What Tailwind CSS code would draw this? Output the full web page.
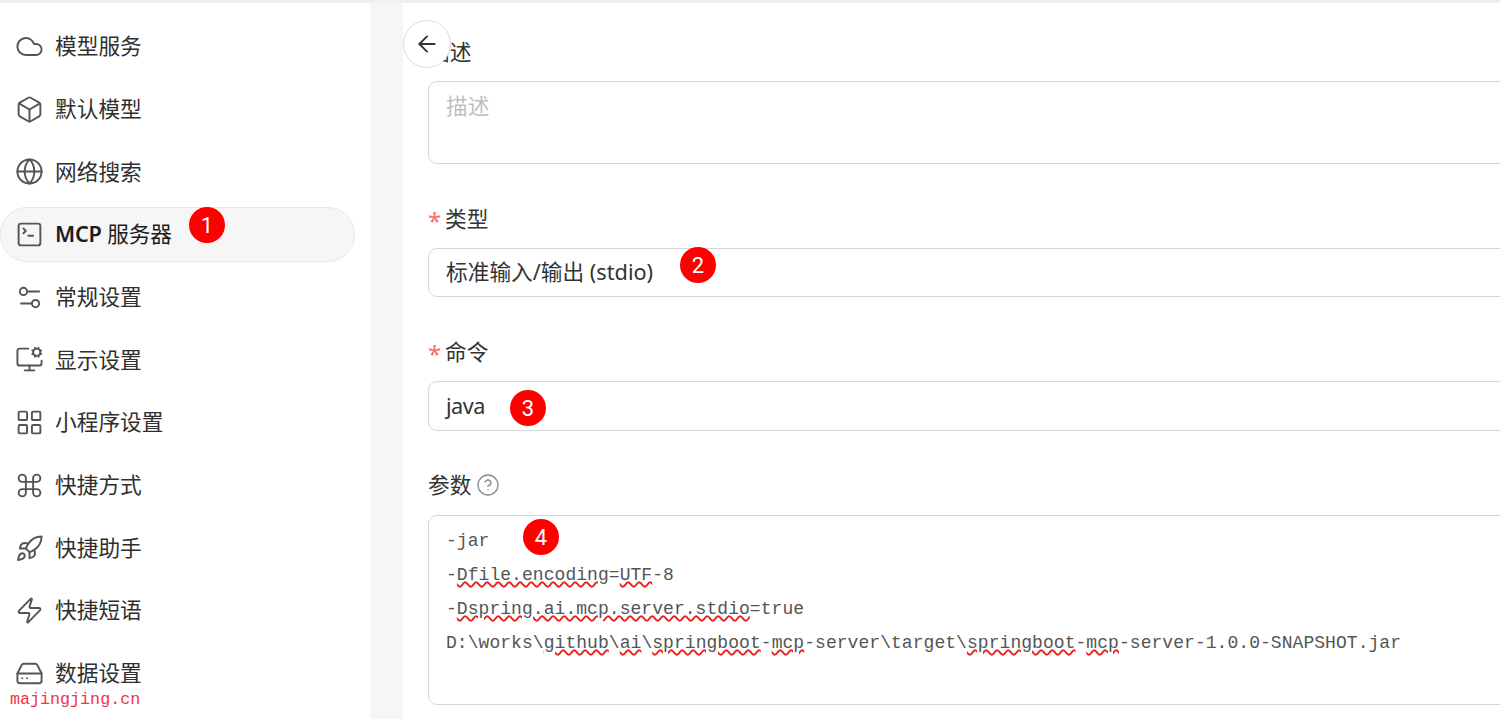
<!DOCTYPE html>
<html lang="zh-CN">
<head>
  <meta charset="UTF-8" />
  <title>MCP 服务器</title>
  <script src="https://cdn.jsdelivr.net/npm/@tailwindcss/browser@4"></script>
</head>
<body class="bg-white h-[719px] overflow-hidden font-['Noto_Sans','Noto_Sans_CJK_SC',sans-serif] text-[21.7px] text-[#333]">
  <div class="relative h-[719px] overflow-hidden">
    <div class="h-[3px] bg-[#f0f0f0]"></div>
    <div class="flex h-[716px]">

      <!-- sidebar -->
      <nav class="w-[370px] shrink-0 bg-white pt-[16px] pr-[15px] flex flex-col gap-[7.7px] text-[#2f2f2f]">
        <a class="flex items-center gap-[11px] h-[55px] pl-[14px] border border-transparent">
          <svg class="w-[29px] h-[29px] text-[#555]" viewBox="0 0 24 24" fill="none" stroke="currentColor" stroke-width="1.6" stroke-linecap="round" stroke-linejoin="round"><path d="M17.5 19H9a7 7 0 1 1 6.71-9h1.79a4.5 4.5 0 1 1 0 9Z"/></svg>
          <span>模型服务</span>
        </a>
        <a class="flex items-center gap-[11px] h-[55px] pl-[14px] border border-transparent">
          <svg class="w-[29px] h-[29px] text-[#555]" viewBox="0 0 24 24" fill="none" stroke="currentColor" stroke-width="1.6" stroke-linecap="round" stroke-linejoin="round"><path d="M21 8a2 2 0 0 0-1-1.73l-7-4a2 2 0 0 0-2 0l-7 4A2 2 0 0 0 3 8v8a2 2 0 0 0 1 1.73l7 4a2 2 0 0 0 2 0l7-4A2 2 0 0 0 21 16Z"/><path d="m3.3 7 8.7 5 8.7-5"/><path d="M12 22V12"/></svg>
          <span>默认模型</span>
        </a>
        <a class="flex items-center gap-[11px] h-[55px] pl-[14px] border border-transparent">
          <svg class="w-[29px] h-[29px] text-[#555]" viewBox="0 0 24 24" fill="none" stroke="currentColor" stroke-width="1.6" stroke-linecap="round" stroke-linejoin="round"><circle cx="12" cy="12" r="10"/><path d="M12 2a14.5 14.5 0 0 0 0 20 14.5 14.5 0 0 0 0-20"/><path d="M2 12h20"/></svg>
          <span>网络搜索</span>
        </a>
        <a class="flex items-center gap-[11px] h-[55px] pl-[14px] border border-[#e8e8e8] bg-[#f6f6f6] rounded-[27px] font-semibold text-[#1c1c1c]">
          <svg class="w-[29px] h-[29px] text-[#555]" viewBox="0 0 24 24" fill="none" stroke="currentColor" stroke-width="1.6" stroke-linecap="round" stroke-linejoin="round"><path d="m7 11 2-2-2-2"/><path d="M11 13h4"/><rect width="18" height="18" x="3" y="3" rx="2"/></svg>
          <span class="tracking-[-0.2px]">MCP <span class="font-normal">服务器</span></span>
        </a>
        <a class="flex items-center gap-[11px] h-[55px] pl-[14px] border border-transparent">
          <svg class="w-[29px] h-[29px] text-[#555]" viewBox="0 0 24 24" fill="none" stroke="currentColor" stroke-width="1.6" stroke-linecap="round" stroke-linejoin="round"><path d="M20 7h-9"/><path d="M14 17H5"/><circle cx="17" cy="17" r="3"/><circle cx="7" cy="7" r="3"/></svg>
          <span>常规设置</span>
        </a>
        <a class="flex items-center gap-[11px] h-[55px] pl-[14px] border border-transparent">
          <svg class="w-[29px] h-[29px] text-[#555]" viewBox="0 0 24 24" fill="none" stroke="currentColor" stroke-width="1.6" stroke-linecap="round" stroke-linejoin="round"><path d="M12 17v4"/><path d="m14.305 7.53.923-.382"/><path d="m15.228 4.852-.923-.383"/><path d="m16.852 3.228-.383-.924"/><path d="m16.852 8.772-.383.923"/><path d="m19.148 3.228.383-.924"/><path d="m19.53 9.696-.382-.924"/><path d="m20.772 4.852.924-.383"/><path d="m20.772 7.148.924.383"/><path d="M22 13v2a2 2 0 0 1-2 2H4a2 2 0 0 1-2-2V5a2 2 0 0 1 2-2h7"/><path d="M8 21h8"/><circle cx="18" cy="6" r="3"/></svg>
          <span>显示设置</span>
        </a>
        <a class="flex items-center gap-[11px] h-[55px] pl-[14px] border border-transparent">
          <svg class="w-[29px] h-[29px] text-[#555]" viewBox="0 0 24 24" fill="none" stroke="currentColor" stroke-width="1.6" stroke-linecap="round" stroke-linejoin="round"><rect width="7" height="7" x="3" y="3" rx="1"/><rect width="7" height="7" x="14" y="3" rx="1"/><rect width="7" height="7" x="14" y="14" rx="1"/><rect width="7" height="7" x="3" y="14" rx="1"/></svg>
          <span>小程序设置</span>
        </a>
        <a class="flex items-center gap-[11px] h-[55px] pl-[14px] border border-transparent">
          <svg class="w-[29px] h-[29px] text-[#555]" viewBox="0 0 24 24" fill="none" stroke="currentColor" stroke-width="1.6" stroke-linecap="round" stroke-linejoin="round"><path d="M15 6v12a3 3 0 1 0 3-3H6a3 3 0 1 0 3 3V6a3 3 0 1 0-3 3h12a3 3 0 1 0-3-3"/></svg>
          <span>快捷方式</span>
        </a>
        <a class="flex items-center gap-[11px] h-[55px] pl-[14px] border border-transparent">
          <svg class="w-[29px] h-[29px] text-[#555]" viewBox="0 0 24 24" fill="none" stroke="currentColor" stroke-width="1.6" stroke-linecap="round" stroke-linejoin="round"><path d="M4.5 16.5c-1.5 1.26-2 5-2 5s3.74-.5 5-2c.71-.84.7-2.13-.09-2.91a2.18 2.18 0 0 0-2.91-.09z"/><path d="m12 15-3-3a22 22 0 0 1 2-3.95A12.88 12.88 0 0 1 22 2c0 2.72-.78 7.5-6 11a22.35 22.35 0 0 1-4 2z"/><path d="M9 12H4s.55-3.03 2-4c1.62-1.08 5 0 5 0"/><path d="M12 15v5s3.03-.55 4-2c1.08-1.62 0-5 0-5"/></svg>
          <span>快捷助手</span>
        </a>
        <a class="flex items-center gap-[11px] h-[55px] pl-[14px] border border-transparent">
          <svg class="w-[29px] h-[29px] text-[#555]" viewBox="0 0 24 24" fill="none" stroke="currentColor" stroke-width="1.6" stroke-linecap="round" stroke-linejoin="round"><path d="M4 14a1 1 0 0 1-.78-1.63l9.9-10.2a.5.5 0 0 1 .86.46l-1.92 6.02A1 1 0 0 0 13 10h7a1 1 0 0 1 .78 1.63l-9.9 10.2a.5.5 0 0 1-.86-.46l1.92-6.02A1 1 0 0 0 11 14z"/></svg>
          <span>快捷短语</span>
        </a>
        <a class="flex items-center gap-[11px] h-[55px] pl-[14px] border border-transparent">
          <svg class="w-[29px] h-[29px] text-[#555]" viewBox="0 0 24 24" fill="none" stroke="currentColor" stroke-width="1.6" stroke-linecap="round" stroke-linejoin="round"><line x1="22" x2="2" y1="12" y2="12"/><path d="M5.45 5.11 2 12v6a2 2 0 0 0 2 2h16a2 2 0 0 0 2-2v-6l-3.45-6.89A2 2 0 0 0 16.76 4H7.24a2 2 0 0 0-1.79 1.11z"/><line x1="6" x2="6.01" y1="16" y2="16"/><line x1="10" x2="10.01" y1="16" y2="16"/></svg>
          <span>数据设置</span>
        </a>
      </nav>

      <!-- gutter -->
      <div class="w-[33px] shrink-0 bg-[#f6f6f6]"></div>

      <!-- form -->
      <main class="flex-1 min-w-0 bg-white pl-[25px] pt-[33px]">
        <div class="w-[1200px] flex flex-col">
          <div class="mb-[39px]">
            <label class="block h-[32px] leading-[32px] mb-[13px]">描述</label>
            <div class="h-[83px] border border-[#d6d6d6] rounded-[9px] px-[17px] py-[7px] leading-[34px] text-[#bfbfbf]">描述</div>
          </div>
          <div class="mb-[39px]">
            <label class="flex items-center h-[32px] mb-[13px]"><span class="w-[17px] text-[#ff6b6b] text-[24px] leading-[32px] pt-[4px]">*</span>类型</label>
            <div class="h-[49px] border border-[#d6d6d6] rounded-[9px] px-[17px] flex items-center">标准输入/输出 (stdio)</div>
          </div>
          <div class="mb-[38px]">
            <label class="flex items-center h-[32px] mb-[13px]"><span class="w-[17px] text-[#ff6b6b] text-[24px] leading-[32px] pt-[4px]">*</span>命令</label>
            <div class="h-[50px] border border-[#d6d6d6] rounded-[9px] px-[17px] flex items-center tracking-[-0.5px]">java</div>
          </div>
          <div>
            <label class="flex items-center gap-[5px] h-[32px] mb-[14px]">参数
              <svg class="w-[24px] h-[24px] text-[#8c8c8c]" viewBox="0 0 24 24" fill="none" stroke="currentColor" stroke-width="1.4" stroke-linecap="round" stroke-linejoin="round"><circle cx="12" cy="12" r="10"/><path d="M9.09 9a3 3 0 0 1 5.83 1c0 2-3 3-3 3"/><path d="M12 17h.01"/></svg>
            </label>
            <div class="h-[190px] border border-[#d6d6d6] rounded-[9px] px-[17px] pt-[8px] font-['Liberation_Mono',monospace] text-[18px] tracking-[0.05px] leading-[34px] text-[#555] whitespace-pre"><div>-jar</div><div>-<span class="underline decoration-wavy decoration-[#e8201c] decoration-[1.5px]">Dfile.encoding</span>=<span class="underline decoration-wavy decoration-[#e8201c] decoration-[1.5px]">UTF</span>-8</div><div>-<span class="underline decoration-wavy decoration-[#e8201c] decoration-[1.5px]">Dspring.ai.mcp.server.stdio</span>=true</div><div>D:\works\<span class="underline decoration-wavy decoration-[#e8201c] decoration-[1.5px]">github</span>\<span class="underline decoration-wavy decoration-[#e8201c] decoration-[1.5px]">ai</span>\<span class="underline decoration-wavy decoration-[#e8201c] decoration-[1.5px]">springboot</span>-<span class="underline decoration-wavy decoration-[#e8201c] decoration-[1.5px]">mcp</span>-server\target\<span class="underline decoration-wavy decoration-[#e8201c] decoration-[1.5px]">springboot</span>-<span class="underline decoration-wavy decoration-[#e8201c] decoration-[1.5px]">mcp</span>-server-1.0.0-SNAPSHOT.jar</div></div>
          </div>
        </div>
      </main>
    </div>

    <!-- back button -->
    <button class="absolute left-[403px] top-[20px] w-[48px] h-[48px] rounded-full bg-white border border-[#dcdcdc] flex items-center justify-center">
      <svg class="w-[26px] h-[26px] text-[#333] -mt-[1px] -ml-[1px]" viewBox="0 0 24 24" fill="none" stroke="currentColor" stroke-width="1.8" stroke-linecap="round" stroke-linejoin="round"><path d="m12 19-7-7 7-7"/><path d="M19 12H5"/></svg>
    </button>

    <!-- numbered callouts -->
    <div class="absolute left-[189px] top-[207px] w-[36px] h-[36px] rounded-full bg-[#fe0000] text-white text-[22px] flex items-center justify-center font-['Roboto',sans-serif]">1</div>
    <div class="absolute left-[680px] top-[247px] w-[36px] h-[36px] rounded-full bg-[#fe0000] text-white text-[22px] flex items-center justify-center font-['Roboto',sans-serif]">2</div>
    <div class="absolute left-[510px] top-[390px] w-[36px] h-[36px] rounded-full bg-[#fe0000] text-white text-[22px] flex items-center justify-center font-['Roboto',sans-serif]">3</div>
    <div class="absolute left-[523px] top-[519px] w-[36px] h-[36px] rounded-full bg-[#fe0000] text-white text-[22px] flex items-center justify-center font-['Roboto',sans-serif]">4</div>

    <!-- watermark -->
    <div class="absolute left-[10px] top-[690px] font-['Liberation_Mono',monospace] text-[16.7px] leading-[20px] text-[#f5333f]">majingjing.cn</div>
  </div>
</body>
</html>
